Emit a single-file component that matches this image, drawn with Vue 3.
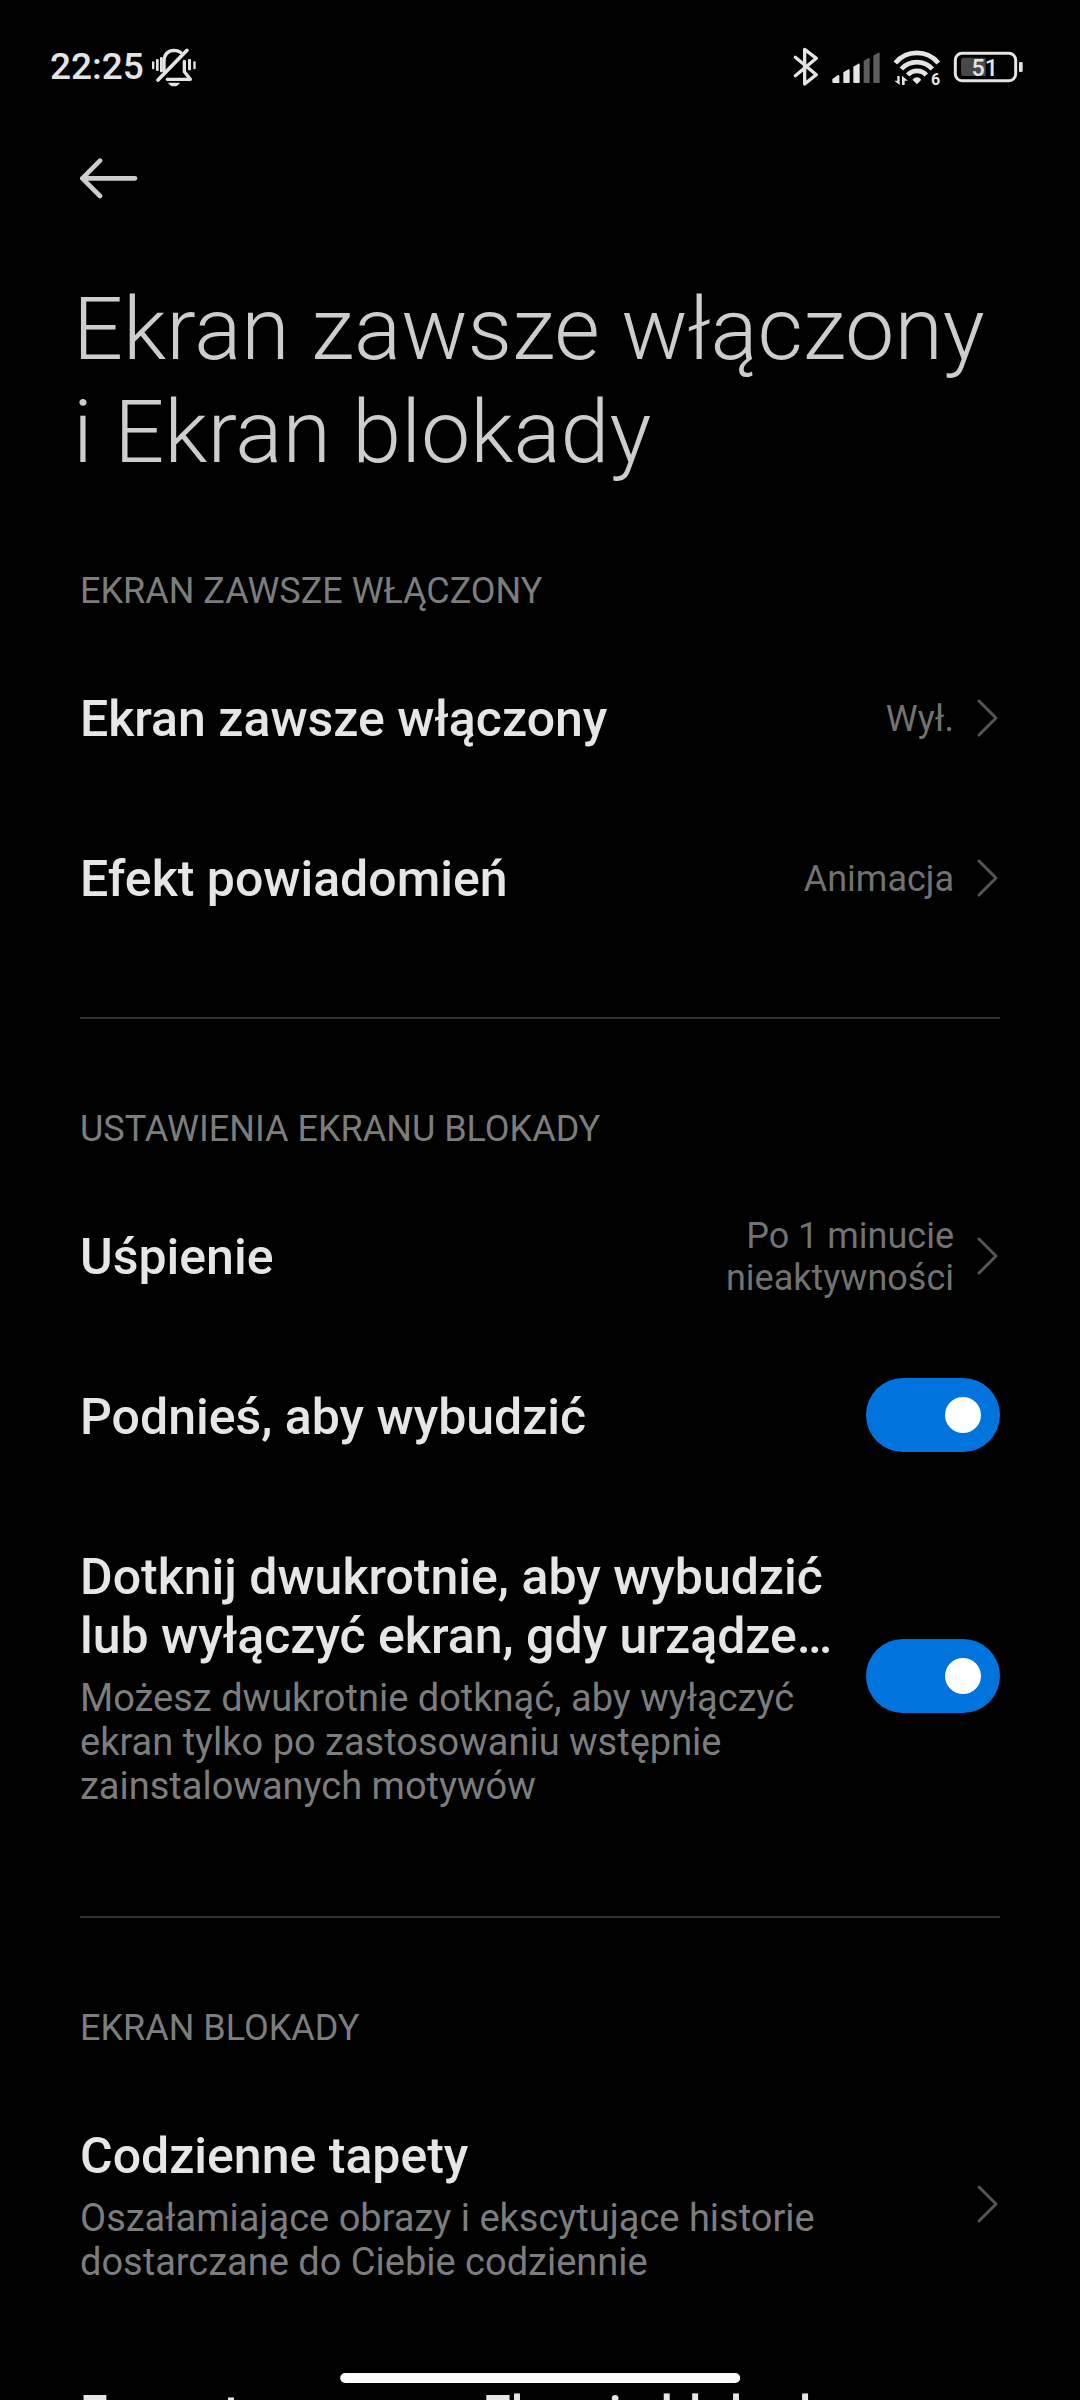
<script setup>
import { ref } from 'vue'

const sections = ref([
  {
    title: 'EKRAN ZAWSZE WŁĄCZONY',
    rows: [
      { id: 'aod', title: 'Ekran zawsze włączony', value: 'Wył.', arrow: true },
      { id: 'effect', title: 'Efekt powiadomień', value: 'Animacja', arrow: true },
    ],
  },
  {
    title: 'USTAWIENIA EKRANU BLOKADY',
    rows: [
      { id: 'sleep', title: 'Uśpienie', value: 'Po 1 minucie nieaktywności', arrow: true },
      { id: 'raise', title: 'Podnieś, aby wybudzić', toggle: true, on: true },
      {
        id: 'double-tap',
        title: 'Dotknij dwukrotnie, aby wybudzić lub wyłączyć ekran, gdy urządze…',
        summary: 'Możesz dwukrotnie dotknąć, aby wyłączyć ekran tylko po zastosowaniu wstępnie zainstalowanych motywów',
        toggle: true,
        on: true,
      },
    ],
  },
  {
    title: 'EKRAN BLOKADY',
    rows: [
      {
        id: 'wallpapers',
        title: 'Codzienne tapety',
        summary: 'Oszałamiające obrazy i ekscytujące historie dostarczane do Ciebie codziennie',
        arrow: true,
      },
      { id: 'clock', title: 'Format zegara na Ekranie blokady' },
    ],
  },
])
</script>

<template>
  <div class="screen">
    <header class="status">
      <time class="clock">22:25</time>
      <svg class="bell" viewBox="360 45 144 126" role="img" aria-label="Wyciszony">
        <g fill="none" stroke="#e4e4e4" stroke-width="10" stroke-linecap="round" stroke-linejoin="round">
          <path d="M402 121 V92 C402 68 416 59 432 58 C440 58 446 60 452 64" />
          <path d="M384 147 L471 58" stroke-width="11" />
          <path d="M412 145 H481 L463 122 V91" />
        </g>
        <g fill="#e4e4e4">
          <path d="M414 155 H450 C446 162 440 166 432 166 C424 166 418 162 414 155 Z" />
          <rect x="366" y="91" width="7" height="24" rx="3" />
          <rect x="378" y="84" width="8" height="36" rx="3" />
          <rect x="390" y="78" width="8" height="46" rx="3" />
          <rect x="474" y="84" width="9" height="34" rx="3" />
          <rect x="490" y="91" width="7" height="24" rx="3" />
        </g>
      </svg>
      <div class="indicators">
        <svg class="bluetooth" viewBox="36 45 84 126" role="img" aria-label="Bluetooth">
          <path d="M46 79 L109 131 L74 159 V55 L109 82 L46 134" fill="none" stroke="#e4e4e4" stroke-width="10" stroke-linecap="round" stroke-linejoin="round" />
        </svg>
        <svg class="signal" viewBox="153 45 150 126" role="img" aria-label="Sygnał">
          <g fill="#e4e4e4">
            <path d="M157 144 L174 132 Q178 131 178 136 V156 H160 Q157 156 157 152 Z" />
            <path d="M190 124 L205 115 Q209 114 209 119 V153 Q209 156 206 156 H193 Q190 156 190 153 Z" />
            <path d="M220 107 L235 98 Q239 97 239 102 V153 Q239 156 236 156 H223 Q220 156 220 153 Z" />
          </g>
          <g fill="#5e5e5e">
            <path d="M251 90 L265 81 Q269 80 269 85 V153 Q269 156 266 156 H254 Q251 156 251 153 Z" />
            <path d="M280 74 L295 65 Q299 64 299 69 V153 Q299 156 296 156 H283 Q280 156 280 153 Z" />
          </g>
        </svg>
        <svg class="wifi" viewBox="333 45 150 126" role="img" aria-label="Wi-Fi 6">
          <g fill="none" stroke="#e4e4e4" stroke-width="14">
            <path d="M343 96 A84 84 0 0 1 472 96" />
            <path d="M361 114 A63 63 0 0 1 454 114" />
            <path d="M380 132 A38 38 0 0 1 436 132" />
          </g>
          <path d="M394 146 Q408 132 421 146 L408 160 Z" fill="#e4e4e4" />
          <path d="M349 135 H356 V162 L340 149 H349 Z M363 162 V134 L381 149 H371 V162 Z" fill="#e4e4e4" />
          <text x="464" y="161" class="wifi-label">6</text>
        </svg>
        <svg class="battery" viewBox="519 45 213 126" role="img" aria-label="Bateria 51%">
          <rect x="526" y="67" width="181" height="82" rx="20" fill="none" stroke="#e4e4e4" stroke-width="9" />
          <path d="M617 80 H553 Q543 80 543 90 V125 Q543 135 553 135 H617 Z" fill="#484848" />
          <rect x="717" y="93" width="11" height="30" rx="4" fill="#e4e4e4" />
          <text x="614" y="134" class="battery-label">51</text>
        </svg>
      </div>
    </header>

    <button class="back" type="button" aria-label="Wstecz">
      <svg viewBox="60 84 174 123">
        <path d="M225 145 H67 M120 92 L67 145 L120 198" fill="none" stroke="#cdcdcd" stroke-width="14" stroke-linecap="round" stroke-linejoin="round" />
      </svg>
    </button>

    <h1 class="page-title">Ekran zawsze włączony i&nbsp;Ekran blokady</h1>

    <main class="content">
      <section v-for="section in sections" :key="section.title" class="section">
        <h2 class="section-title">{{ section.title }}</h2>
        <component
          :is="row.toggle ? 'label' : 'button'"
          v-for="row in section.rows"
          :key="row.id"
          class="row"
          :type="row.toggle ? undefined : 'button'"
          :for="row.toggle ? row.id : undefined"
        >
          <span class="row-text">
            <span class="row-title">{{ row.title }}</span>
            <span v-if="row.summary" class="row-summary">{{ row.summary }}</span>
          </span>
          <span v-if="row.value" class="row-value">{{ row.value }}</span>
          <input v-if="row.toggle" :id="row.id" v-model="row.on" class="switch" type="checkbox" role="switch" />
          <svg v-if="row.arrow" class="chevron" viewBox="0 0 24 40" aria-hidden="true">
            <path d="M3 3 L20 20 L3 37" fill="none" stroke="#555" stroke-width="3" stroke-linecap="round" stroke-linejoin="round" />
          </svg>
        </component>
      </section>
    </main>

    <div class="home-bar"></div>
  </div>
</template>

<style>
body {
  background: #000;
}
</style>

<style scoped>
.screen {
  display: flex;
  flex-direction: column;
  height: 100vh;
  overflow: hidden;
  background: #000;
  color: #e6e6e6;
  font-family: Roboto, "Liberation Sans", sans-serif;
}

.status {
  display: flex;
  flex: none;
  align-items: center;
  gap: 6px;
  padding: 45px 56px 0 50px;
}

.status svg {
  flex: none;
  height: 42px;
}

.clock {
  color: #e4e4e4;
  font-size: 37px;
  font-weight: 500;
  line-height: 44px;
}

.bell { width: 48px; }
.bluetooth { width: 28px; }
.signal { width: 50px; }
.wifi { width: 50px; }
.battery { width: 71px; }

.indicators {
  display: flex;
  gap: 11px;
  margin-left: auto;
}

.wifi-label,
.battery-label {
  fill: #e4e4e4;
  text-anchor: middle;
}

.wifi-label {
  font-size: 48px;
  font-weight: 700;
}

.battery-label {
  font-size: 70px;
  font-weight: 500;
}

button {
  margin: 0;
  padding: 0;
  border: 0;
  background: none;
  color: inherit;
  font: inherit;
  text-align: left;
}

.back {
  flex: none;
  align-self: flex-start;
  margin: 69px 80px 0;
}

.back svg {
  display: block;
  width: 58px;
  height: 41px;
}

.page-title {
  flex: none;
  margin: 78px 73px 0;
  color: #cdcdcd;
  font-size: 88px;
  font-weight: 300;
  line-height: 103px;
}

.content {
  flex: 1;
  min-height: 0;
  padding: 87px 80px 0;
}

.section + .section {
  margin-top: 59px;
  padding-top: 89px;
  border-top: 2px solid #333;
}

.section-title {
  margin: 0 0 26px;
  color: #7d7d7d;
  font-size: 36px;
  font-weight: 400;
  line-height: 42px;
}

.row {
  display: flex;
  align-items: center;
  width: 100%;
  min-height: 160px;
}

.row-text {
  display: flex;
  flex: 1;
  flex-direction: column;
  gap: 10px;
  min-width: 0;
  padding: 52px 0 49px;
}

.row-title {
  font-size: 50px;
  font-weight: 500;
  line-height: 59px;
}

.row-summary {
  color: #7d7d7d;
  font-size: 38px;
  line-height: 44px;
}

.row-value {
  max-width: 260px;
  padding-top: 2px;
  color: #727272;
  font-size: 36px;
  line-height: 42px;
  text-align: right;
}

.chevron {
  flex: none;
  width: 24px;
  height: 40px;
  margin-left: 22px;
}

.switch {
  display: flex;
  flex: none;
  align-items: center;
  box-sizing: border-box;
  width: 134px;
  height: 74px;
  margin: 0 0 2px 28px;
  padding: 0 19px;
  border-radius: 37px;
  background: #333;
  appearance: none;
}

.switch::before {
  width: 36px;
  height: 36px;
  border-radius: 50%;
  background: #fff;
  content: "";
}

.switch:checked {
  justify-content: flex-end;
  background: #0073dd;
}

.home-bar {
  position: fixed;
  bottom: 17px;
  left: 50%;
  width: 37%;
  height: 10px;
  border-radius: 5px;
  background: #fff;
  transform: translateX(-50%);
}
</style>
